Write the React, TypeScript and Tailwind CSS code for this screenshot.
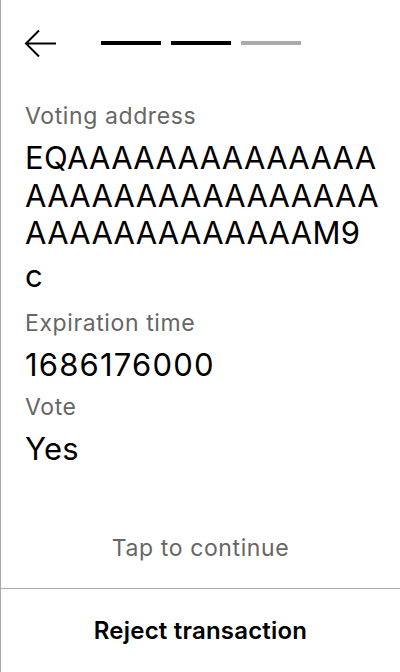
import React from "react";

const addressLines = [
  "EQAAAAAAAAAAAAAA",
  "AAAAAAAAAAAAAAAA",
  "AAAAAAAAAAAAAM9",
];

function BackArrow() {
  return (
    <svg width="33" height="28" viewBox="0 0 33 28" fill="none">
      <path
        d="M2 14.5H32M15 1.5L2 14.5L15 27.5"
        stroke="#000"
        strokeWidth="2"
      />
    </svg>
  );
}

function Field({
  label,
  children,
  className = "",
  valueClassName = "tracking-[0.3px]",
}: {
  label: string;
  children: React.ReactNode;
  className?: string;
  valueClassName?: string;
}) {
  return (
    <div className={`flex flex-col ${className}`}>
      <span className="text-[23px] leading-[28px] tracking-[0.6px] text-[#666]">{label}</span>
      <div className={`mt-[9px] text-[31px] leading-[37.5px] text-black ${valueClassName}`}>
        {children}
      </div>
    </div>
  );
}

export default function App() {
  return (
    <div
      className="w-[400px] h-[672px] flex flex-col bg-white border-l border-[#a8a8a8]"
      style={{ fontFamily: "Inter, 'Noto Sans', sans-serif" }}
    >
      {/* header: back + step bars */}
      <div className="flex items-center h-[28px] mt-[29px] pl-[23px]">
        <BackArrow />
        <div className="flex gap-[10px] ml-[44px]">
          <div className="w-[60px] h-[4px] bg-black" />
          <div className="w-[60px] h-[4px] bg-black" />
          <div className="w-[60px] h-[4px] bg-[#aaa]" />
        </div>
      </div>

      <div className="flex flex-col pl-[24px] mt-[45px]">
        <Field label="Voting address">
          {addressLines.map((line) => (
            <div key={line}>{line}</div>
          ))}
          <div className="mt-[5px]">c</div>
        </Field>
        <Field label="Expiration time" className="mt-[15px]">
          <span className="tracking-[1.2px]">1686176000</span>
        </Field>
        <Field label="Vote" className="mt-[9px]">
          Yes
        </Field>
      </div>

      <div className="flex-1" />

      <div className="text-center text-[23px] leading-[28px] tracking-[0.6px] text-[#666] pb-[26px]">
        Tap to continue
      </div>
      <button className="h-[84px] border-t border-[#aaa] text-[24px] font-semibold tracking-[0.2px] text-black">
        Reject transaction
      </button>
    </div>
  );
}
